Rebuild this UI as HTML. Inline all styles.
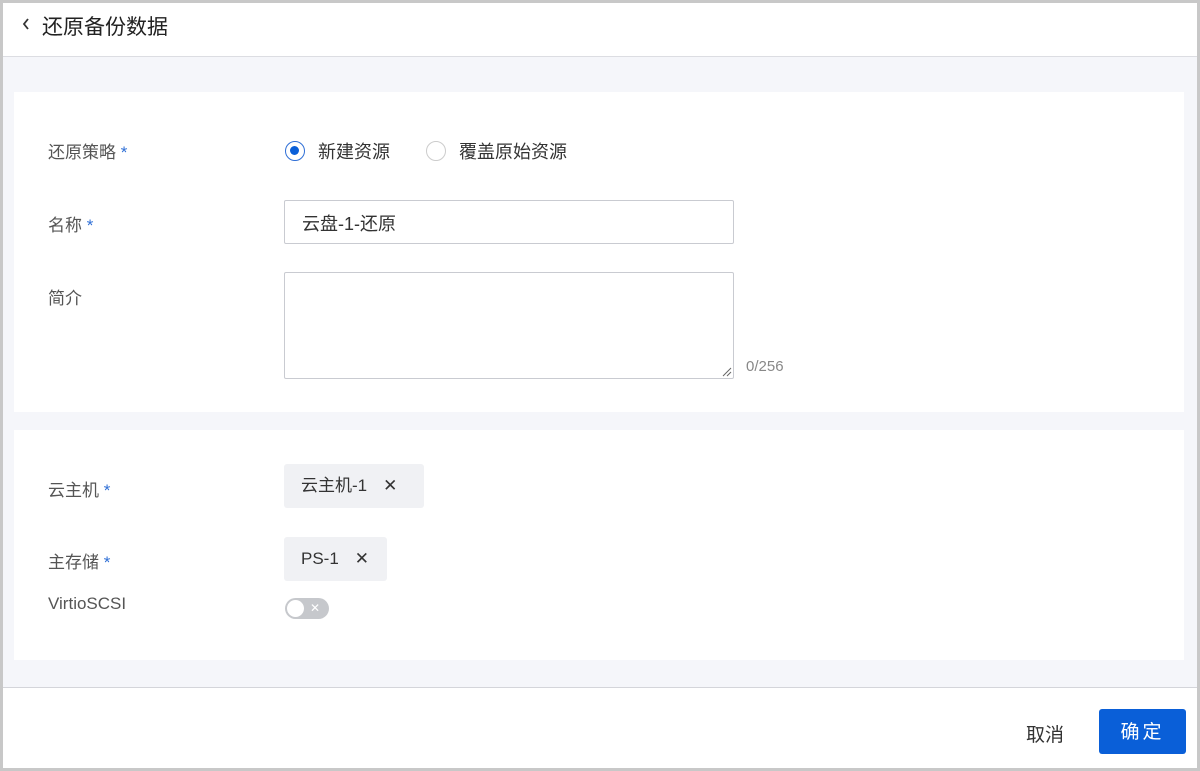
<!DOCTYPE html>
<html><head><meta charset="utf-8"><style>
*{box-sizing:border-box;margin:0;padding:0}
html,body{width:1200px;height:771px;overflow:hidden;background:#c8c8c8}
body{font-family:"Liberation Sans","Noto Sans CJK SC",sans-serif;position:relative}
.frame{position:absolute;left:3px;top:3px;width:1194px;height:765px;background:#f5f6fa}
.hdr{position:absolute;left:0;top:0;width:1194px;height:54px;background:#fff;border-bottom:1px solid #dcdde2}
.hdr .t{position:absolute;left:39px;top:8px;font-size:21px;color:#222}
.hdr svg{position:absolute;left:18px;top:14px}
.panel{position:absolute;left:11px;width:1170px;background:#fff}
.lbl{position:absolute;left:34px;font-size:17px;color:#555}
.lbl i{font-style:normal;color:#2f6fd6}
.ft{position:absolute;left:0;top:684px;width:1194px;height:81px;background:#fff;border-top:1px solid #d4d5da}
.tag{position:absolute;left:270px;height:44px;background:#f0f1f4;border-radius:3px;font-size:17px;color:#333;line-height:44px;padding-left:17px}
.tag span{margin-left:16px}
</style></head><body><div class="frame">
<div class="hdr"><svg width="10" height="14" viewBox="0 0 10 14"><path d="M7 2 L3 7 L7 12" stroke="#333" stroke-width="1.8" fill="none"/></svg><div class="t">还原备份数据</div></div>
<div class="panel" style="top:89px;height:320px">
<div class="lbl" style="top:46px">还原策略 <i>*</i></div>
<div style="position:absolute;left:271px;top:49px;width:20px;height:20px;border:1.5px solid #2f6fd6;border-radius:50%"><div style="position:absolute;left:4px;top:4px;width:9px;height:9px;border-radius:50%;background:#0a5fd8"></div></div>
<div style="position:absolute;left:304px;top:46px;font-size:18px;color:#333">新建资源</div>
<div style="position:absolute;left:412px;top:49px;width:20px;height:20px;border:1px solid #ccc;border-radius:50%"></div>
<div style="position:absolute;left:445px;top:46px;font-size:18px;color:#333">覆盖原始资源</div>
<div class="lbl" style="top:119px">名称 <i>*</i></div>
<div style="position:absolute;left:270px;top:108px;width:450px;height:44px;border:1px solid #c9cbd1;border-radius:2px;font-size:18px;color:#333;padding:9px 0 0 17px">云盘-1-还原</div>
<div class="lbl" style="top:192px">简介</div>
<div style="position:absolute;left:270px;top:180px;width:450px;height:107px;border:1px solid #c9cbd1;border-radius:2px"><svg style="position:absolute;right:1px;bottom:1px" width="10" height="10"><path d="M9 1 L1 9 M9 5 L5 9" stroke="#666"/></svg></div>
<div style="position:absolute;left:732px;top:266px;font-size:15px;color:#888">0/256</div>
</div>
<div class="panel" style="top:427px;height:230px">
<div class="lbl" style="top:46px">云主机 <i>*</i></div>
<div class="tag" style="top:34px;width:140px">云主机-1<span>✕</span></div>
<div class="lbl" style="top:118px">主存储 <i>*</i></div>
<div class="tag" style="top:107px;width:103px">PS-1<span>✕</span></div>
<div class="lbl" style="top:164px">VirtioSCSI</div>
<div style="position:absolute;left:271px;top:168px;width:44px;height:21px;border-radius:11px;background:#c6c8cc"><div style="position:absolute;left:2px;top:2px;width:17px;height:17px;border-radius:50%;background:#fff"></div><span style="position:absolute;left:25px;top:3px;font-size:12px;line-height:14px;color:#fff">✕</span></div>
</div>
<div class="ft">
<div style="position:absolute;left:1023px;top:32px;font-size:19px;color:#333">取消</div>
<div style="position:absolute;left:1096px;top:21px;width:87px;height:45px;background:#0a5fd8;border-radius:3px;color:#fff;font-size:19px;text-align:center;line-height:47px;letter-spacing:3px">确定</div>
</div>
</div></body></html>
